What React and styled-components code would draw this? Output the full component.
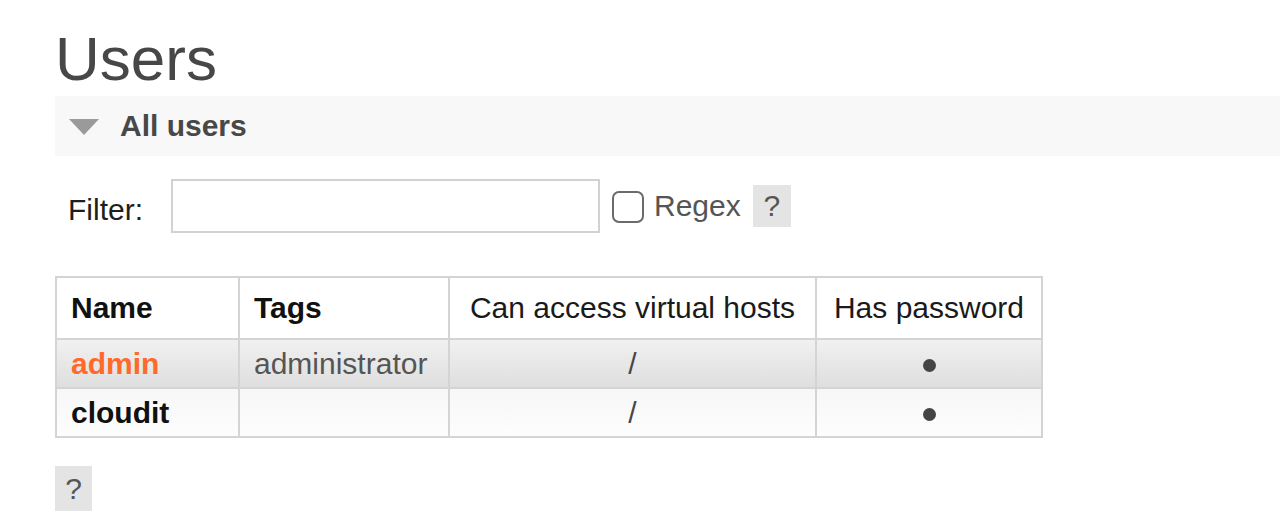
import styled, { createGlobalStyle } from "styled-components";
import { useState } from "react";

const GlobalStyle = createGlobalStyle`
  html, body {
    margin: 0;
    padding: 0;
    background: #ffffff;
  }
  body {
    font-family: "Liberation Sans", Arial, sans-serif;
    font-size: 30px;
    color: #222222;
  }
`;

const Page = styled.div`
  padding: 28px 0 0 55px;
  overflow: hidden;
`;

const Title = styled.h1`
  margin: 0 0 6px;
  font-size: 62px;
  font-weight: normal;
  line-height: 62px;
  color: #474747;
`;

const SectionBar = styled.div`
  display: flex;
  align-items: center;
  height: 60px;
  margin-right: -40px;
  padding-left: 14px;
  background: #f8f8f8;
`;

const Arrow = styled.span`
  width: 0;
  height: 0;
  border-left: 15px solid transparent;
  border-right: 15px solid transparent;
  border-top: 16px solid #9a9a9a;
  margin: 2px 21px 0 0;
`;

const SectionTitle = styled.h2`
  margin: 0;
  font-size: 30px;
  font-weight: bold;
  line-height: 60px;
  color: #484848;
`;

const FilterRow = styled.div`
  display: flex;
  align-items: center;
  margin-top: 23px;
  padding-left: 13px;
`;

const Label = styled.label`
  margin: 7px 28px 0 0;
  color: #1e1e1e;
`;

const TextInput = styled.input`
  box-sizing: border-box;
  width: 429px;
  height: 54px;
  border: 2px solid #d2d2d2;
  font: inherit;
  padding: 0 8px;
  outline: none;
`;

const Check = styled.input`
  appearance: none;
  box-sizing: border-box;
  width: 32px;
  height: 32px;
  margin: 2px 10px 0 12px;
  border: 2px solid #6a6a6a;
  border-radius: 7px;
  background: #ffffff;
`;

const CheckLabel = styled.span`
  color: #555555;
  margin-right: 12px;
`;

const HelpBox = styled.span`
  display: inline-flex;
  align-items: center;
  justify-content: center;
  box-sizing: border-box;
  width: ${(p) => p.$w}px;
  height: ${(p) => p.$h}px;
  background: #e4e4e4;
  color: #555555;
  font-size: 30px;
`;

const Table = styled.table`
  margin-top: 43px;
  border-collapse: collapse;
  table-layout: fixed;
  width: 986px;
`;

const Th = styled.th`
  height: 60px;
  padding: 0 14px;
  border: 2px solid #d4d4d4;
  background: #ffffff;
  color: ${(p) => (p.$bold ? "#111111" : "#1a1a1a")};
  font-weight: ${(p) => (p.$bold ? "bold" : "normal")};
  text-align: ${(p) => (p.$center ? "center" : "left")};
  white-space: nowrap;
`;

const Row = styled.tr`
  background: ${(p) =>
    p.$alt
      ? "linear-gradient(#f1f1f1, #dedede)"
      : "linear-gradient(#f7f7f7, #fdfdfd)"};
`;

const Td = styled.td`
  height: 47px;
  padding: 0 14px;
  border: 2px solid #d4d4d4;
  text-align: ${(p) => (p.$center ? "center" : "left")};
  color: #474747;
  white-space: nowrap;
`;

const UserName = styled.span`
  font-weight: bold;
  color: ${(p) => (p.$admin ? "#ff6a2b" : "#111111")};
`;

const Tag = styled.span`
  color: #555555;
`;

const Dot = styled.span`
  display: inline-block;
  width: 13px;
  height: 13px;
  border-radius: 50%;
  background: #444444;
  vertical-align: middle;
`;

const Footer = styled.div`
  margin-top: 28px;
`;

const users = [
  { name: "admin", tags: "administrator", vhosts: "/", admin: true },
  { name: "cloudit", tags: "", vhosts: "/", admin: false },
];

export default function App() {
  const [filter, setFilter] = useState("");
  const [regex, setRegex] = useState(false);

  return (
    <Page>
      <GlobalStyle />
      <Title>Users</Title>
      <SectionBar>
        <Arrow />
        <SectionTitle>All users</SectionTitle>
      </SectionBar>
      <FilterRow>
        <Label>Filter:</Label>
        <TextInput value={filter} onChange={(e) => setFilter(e.target.value)} />
        <Check
          type="checkbox"
          checked={regex}
          onChange={(e) => setRegex(e.target.checked)}
        />
        <CheckLabel>Regex</CheckLabel>
        <HelpBox $w={38} $h={42}>?</HelpBox>
      </FilterRow>
      <Table>
        <colgroup>
          <col style={{ width: 183 }} />
          <col style={{ width: 210 }} />
          <col style={{ width: 367 }} />
          <col style={{ width: 226 }} />
        </colgroup>
        <thead>
          <tr>
            <Th $bold>Name</Th>
            <Th $bold>Tags</Th>
            <Th $center>Can access virtual hosts</Th>
            <Th $center>Has password</Th>
          </tr>
        </thead>
        <tbody>
          {users.map((u, i) => (
            <Row key={u.name} $alt={i % 2 === 0}>
              <Td>
                <UserName $admin={u.admin}>{u.name}</UserName>
              </Td>
              <Td>
                <Tag>{u.tags}</Tag>
              </Td>
              <Td $center>{u.vhosts}</Td>
              <Td $center>
                <Dot />
              </Td>
            </Row>
          ))}
        </tbody>
      </Table>
      <Footer>
        <HelpBox $w={37} $h={45}>?</HelpBox>
      </Footer>
    </Page>
  );
}
